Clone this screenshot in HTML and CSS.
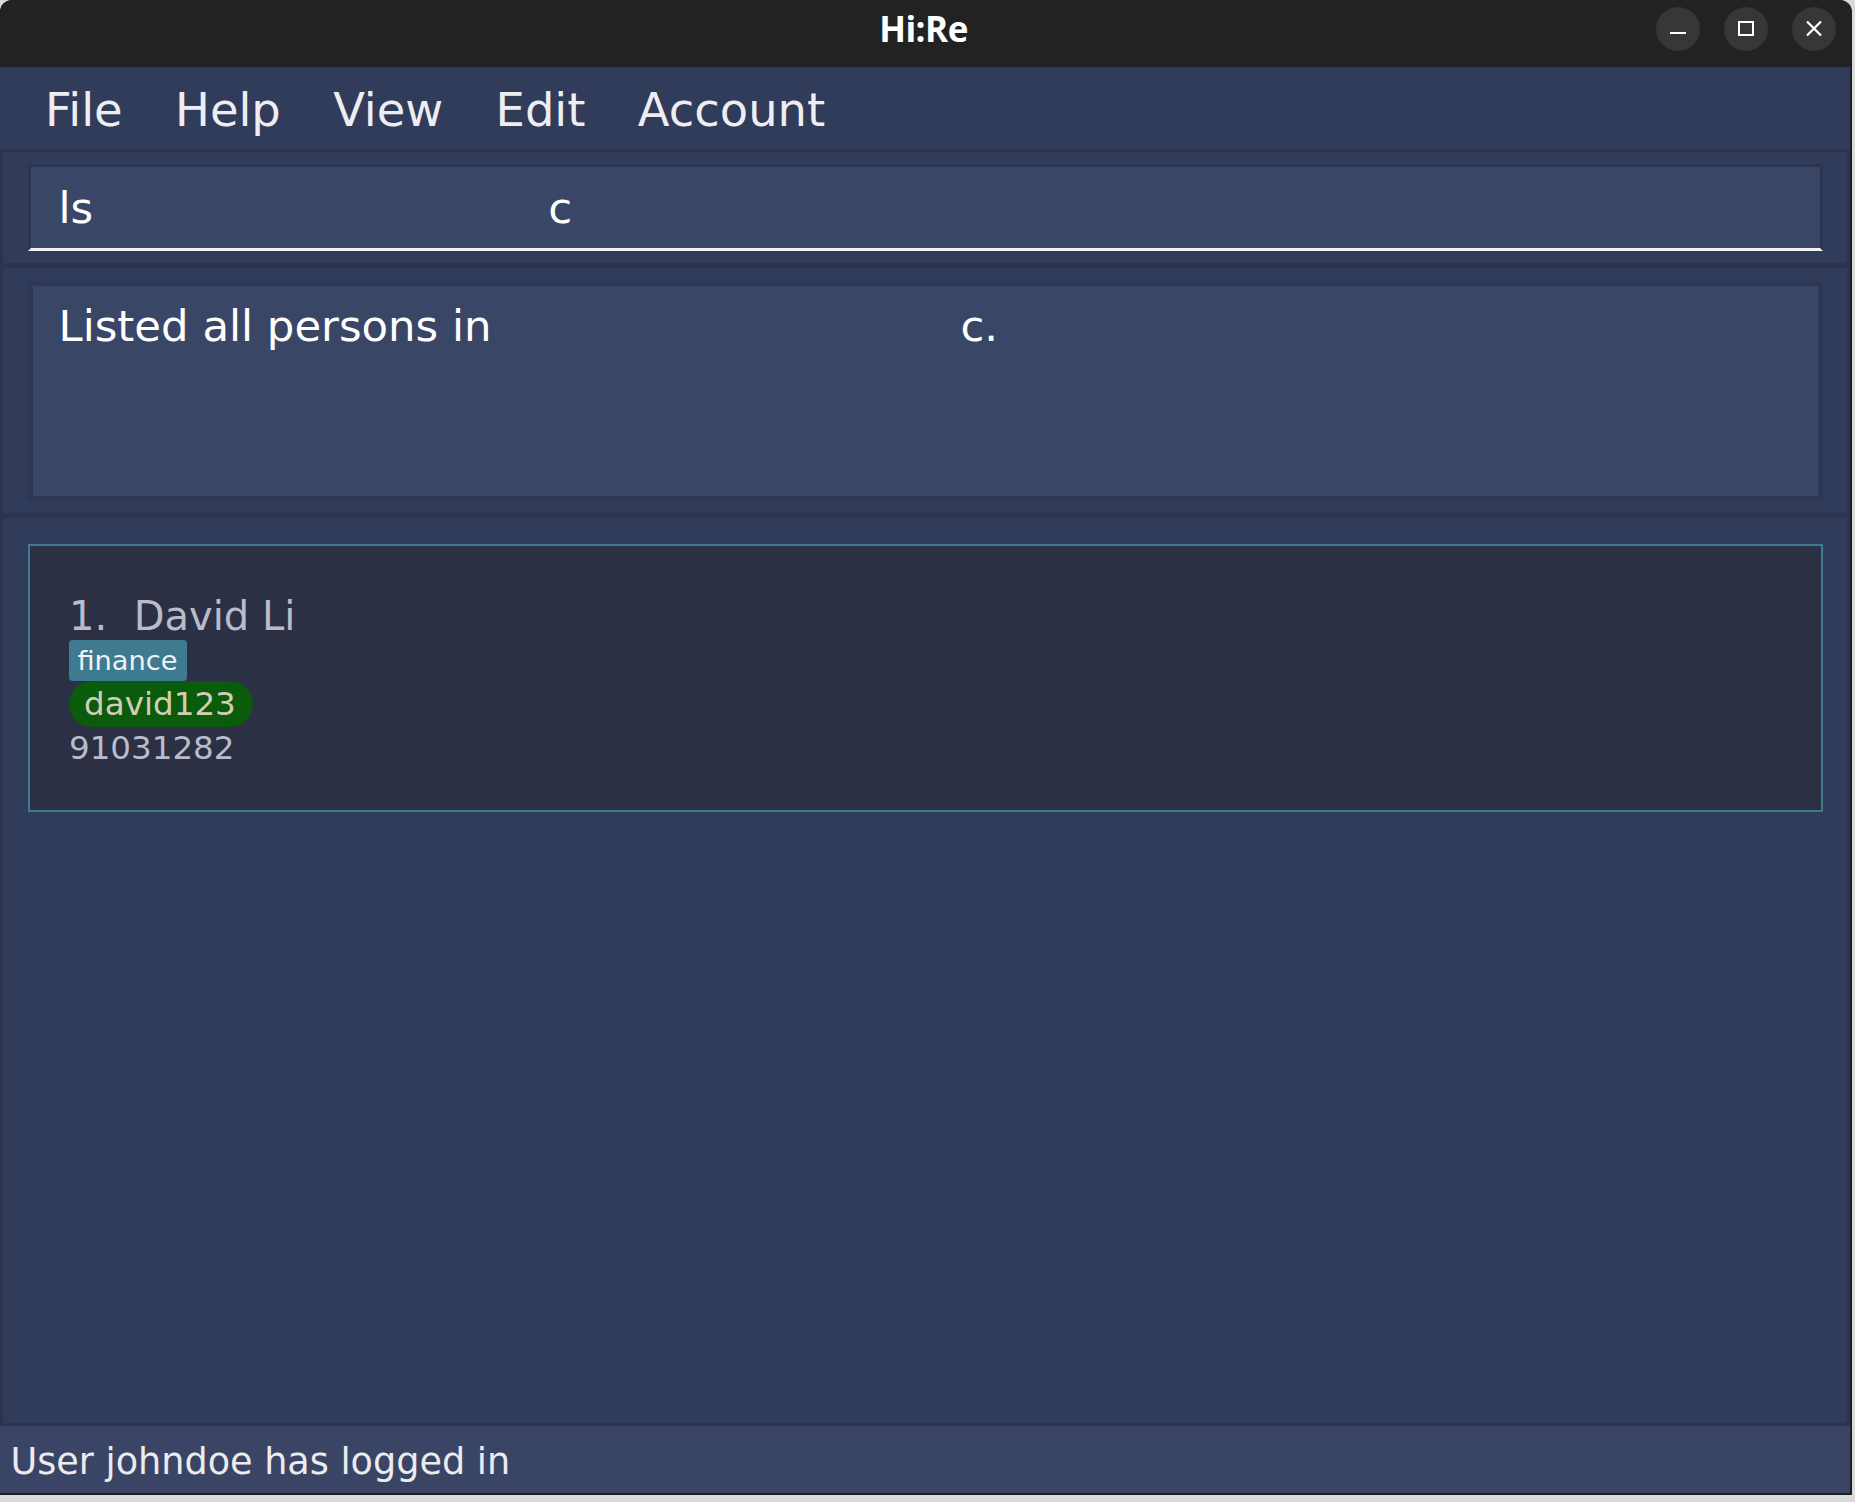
FILE: index.html
```html
<!DOCTYPE html>
<html lang="en">
<head>
<meta charset="utf-8">
<title>Hi:Re</title>
<link rel="stylesheet" href="styles.css">
</head>
<body>
<div class="window">
  <header class="titlebar">
    <div class="tb-left"></div>
    <div class="tb-title">Hi:Re</div>
    <div class="tb-buttons">
      <span class="tb-btn">
        <svg width="44" height="44" viewBox="0 0 44 44"><line x1="14" y1="26" x2="30" y2="26" stroke="#fff" stroke-width="2"/></svg>
      </span>
      <span class="tb-btn">
        <svg width="44" height="44" viewBox="0 0 44 44"><rect x="15" y="15" width="14" height="13" fill="none" stroke="#fff" stroke-width="2"/></svg>
      </span>
      <span class="tb-btn">
        <svg width="44" height="44" viewBox="0 0 44 44"><path d="M15 14.5 L29 28.5 M29 14.5 L15 28.5" stroke="#fff" stroke-width="2.2" fill="none"/></svg>
      </span>
    </div>
  </header>

  <nav class="menubar">
    <span class="menu-item">File</span>
    <span class="menu-item">Help</span>
    <span class="menu-item">View</span>
    <span class="menu-item">Edit</span>
    <span class="menu-item">Account</span>
  </nav>

  <section class="command-pane">
    <div class="command-field">ls                                 c</div>
  </section>

  <section class="result-pane">
    <div class="result-box">Listed all persons in                                  c.</div>
  </section>

  <section class="list-pane">
    <article class="card">
      <div class="card-name"><span class="card-id">1.</span><span>David Li</span></div>
      <div class="tags"><span class="tag">finance</span></div>
      <div class="accounts"><span class="pill">david123</span></div>
      <div class="phone">91031282</div>
    </article>
  </section>

  <footer class="statusbar">User johndoe has logged in</footer>
</div>
</body>
</html>
```

FILE: styles.css
```css
html, body {
  margin: 0;
  padding: 0;
}

body {
  background: #dadada;
  width: 1855px;
  height: 1502px;
  overflow: hidden;
  font-family: "DejaVu Sans", "Noto Sans", sans-serif;
}

.window {
  width: 1850px;
  height: 1493px;
  background: #313b5a;
  border-right: 2px solid #1f1f1f;
  border-bottom: 2px solid #1f1f1f;
  border-radius: 12px 12px 0 0;
  overflow: hidden;
  display: flex;
  flex-direction: column;
}

/* Title bar */
.titlebar {
  height: 67px;
  flex: none;
  background: #222222;
  display: grid;
  grid-template-columns: 1fr auto 1fr;
  align-items: start;
  padding-top: 7px;
  box-sizing: border-box;
}

.tb-title {
  font-family: "Open Sans", "DejaVu Sans", sans-serif;
  font-weight: 700;
  font-size: 35px;
  line-height: 44px;
  color: #ffffff;
  letter-spacing: -0.5px;
  margin-left: -3px;
}

.tb-buttons {
  display: flex;
  justify-content: flex-end;
  gap: 24px;
  padding-right: 14px;
}

.tb-btn {
  width: 44px;
  height: 44px;
  border-radius: 50%;
  background: #373737;
  display: block;
}

.tb-btn svg {
  display: block;
}

/* Menu bar */
.menubar {
  height: 85px;
  flex: none;
  box-sizing: border-box;
  border-bottom: 3px solid #2c3450;
  padding: 4px 0 0 18.8px;
  display: flex;
}

.menu-item {
  font-size: 46.4px;
  line-height: 78px;
  color: #eeeef2;
  padding: 0 26.2px;
}

/* Command pane */
.command-pane {
  flex: none;
  height: 114px;
  box-sizing: border-box;
  border-left: 3px solid #2c3450;
  border-right: 3px solid #2c3450;
  border-bottom: 3px solid #2c3450;
  padding: 12px 24px 12px 25px;
}

.command-field {
  height: 87px;
  box-sizing: border-box;
  background: #3a4666;
  border-top: 3px solid #2d3551;
  border-left: 3px solid #2d3551;
  border-right: 3px solid #2d3551;
  border-bottom: 3px solid #f4f4f6;
  padding: 2px 0 0 27.4px;
  font-size: 43.4px;
  line-height: 79px;
  color: #ffffff;
  white-space: pre;
}

/* Result pane */
.result-pane {
  flex: none;
  height: 252px;
  box-sizing: border-box;
  border-left: 3px solid #2c3450;
  border-right: 3px solid #2c3450;
  border-top: 2px solid #2c3450;
  border-bottom: 5px solid #2c3450;
  padding: 13px 24px 12px 25px;
}

.result-box {
  height: 220px;
  box-sizing: border-box;
  background: #3a4666;
  border: 5px solid #2e3753;
  padding: 15px 22px 15px 25.5px;
  font-size: 43.4px;
  color: #ffffff;
  white-space: pre;
}

/* Person list */
.list-pane {
  flex: 1;
  box-sizing: border-box;
  border-left: 3px solid #2c3450;
  border-right: 3px solid #2c3450;
  border-bottom: 3px solid #2c3450;
  padding: 26px 24px 0 25px;
}

.card {
  height: 268px;
  box-sizing: border-box;
  background: #2c3044;
  border: 2px solid #3e7b91;
  padding: 47px 0 0 39px;
  color: #b9bccb;
}

.card-name {
  display: flex;
  gap: 26.5px;
  font-size: 40px;
  line-height: 47px;
}

.tags,
.accounts {
  display: flex;
}

.tag {
  background: #3e7b91;
  color: #f0f2f4;
  font-size: 27.2px;
  line-height: 41px;
  padding: 0 9.5px 0 8.5px;
  border-radius: 4px;
}

.pill {
  background: #0b5b0c;
  color: #d3cdb5;
  font-size: 32.6px;
  line-height: 46px;
  padding: 0 17px 0 15px;
  border-radius: 23px;
}

.phone {
  margin-top: 3px;
  font-size: 32.5px;
  line-height: 37px;
}

/* Status bar */
.statusbar {
  flex: none;
  height: 67px;
  box-sizing: border-box;
  background: #3a4565;
  padding: 14px 0 0 10.5px;
  font-size: 36.6px;
  color: #ebebf0;
}
```
